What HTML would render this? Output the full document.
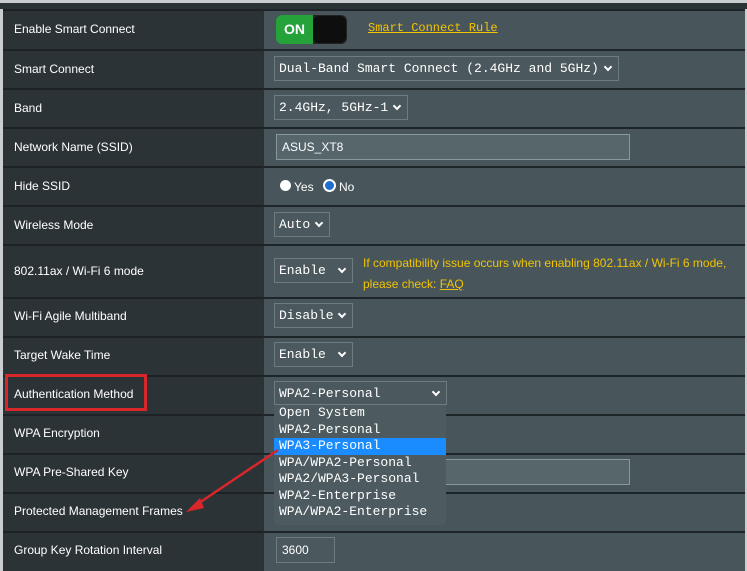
<!DOCTYPE html><html><head><style>
body{margin:0;width:747px;height:569px;background:#c9cdcf;position:relative;overflow:hidden;font-family:"Liberation Sans",Arial,sans-serif}
.a{position:absolute}
.lab{position:absolute;left:3px;width:260px;background:#2c3337;border-top:2px solid #1c2225}
.val{position:absolute;left:263px;width:481px;background:#48565b;border-top:2px solid #1e2528;border-left:1px solid #2a3134}
.t{position:absolute;left:14px;color:#fff;font-size:12px}
.sel{position:absolute;background:#4b595e;border:1px solid #6e7c81;color:#fff;font:13px "Liberation Mono",monospace;box-sizing:border-box;padding-left:4px;line-height:23px;height:25px}
.sel:after{content:"";position:absolute;right:7px;top:7px;width:4px;height:4px;border-right:2px solid #fff;border-bottom:2px solid #fff;transform:rotate(45deg)}
.m{font:13px "Liberation Mono",monospace;color:#fff}
</style></head><body>
<div class="a" style="left:0;top:3px;width:747px;height:6px;background:#2c3337"></div>
<div class="lab" style="top:9px;height:38px"></div><div class="val" style="top:9px;height:38px"></div>
<div class="lab" style="top:49px;height:37px"></div><div class="val" style="top:49px;height:37px"></div>
<div class="lab" style="top:88px;height:37px"></div><div class="val" style="top:88px;height:37px"></div>
<div class="lab" style="top:127px;height:37px"></div><div class="val" style="top:127px;height:37px"></div>
<div class="lab" style="top:166px;height:37px"></div><div class="val" style="top:166px;height:37px"></div>
<div class="lab" style="top:205px;height:37px"></div><div class="val" style="top:205px;height:37px"></div>
<div class="lab" style="top:244px;height:51px"></div><div class="val" style="top:244px;height:51px"></div>
<div class="lab" style="top:297px;height:37px"></div><div class="val" style="top:297px;height:37px"></div>
<div class="lab" style="top:336px;height:37px"></div><div class="val" style="top:336px;height:37px"></div>
<div class="lab" style="top:375px;height:37px"></div><div class="val" style="top:375px;height:37px"></div>
<div class="lab" style="top:414px;height:37px"></div><div class="val" style="top:414px;height:37px"></div>
<div class="lab" style="top:453px;height:37px"></div><div class="val" style="top:453px;height:37px"></div>
<div class="lab" style="top:492px;height:37px"></div><div class="val" style="top:492px;height:37px"></div>
<div class="lab" style="top:531px;height:38px"></div><div class="val" style="top:531px;height:38px"></div>
<div class="t" style="top:22px">Enable Smart Connect</div>
<div class="t" style="top:62px">Smart Connect</div>
<div class="t" style="top:101px">Band</div>
<div class="t" style="top:140px">Network Name (SSID)</div>
<div class="t" style="top:179px">Hide SSID</div>
<div class="t" style="top:218px">Wireless Mode</div>
<div class="t" style="top:264px">802.11ax / Wi-Fi 6 mode</div>
<div class="t" style="top:309px">Wi-Fi Agile Multiband</div>
<div class="t" style="top:348px">Target Wake Time</div>
<div class="t" style="top:387px">Authentication Method</div>
<div class="t" style="top:426px">WPA Encryption</div>
<div class="t" style="top:465px">WPA Pre-Shared Key</div>
<div class="t" style="top:504px">Protected Management Frames</div>
<div class="t" style="top:543px">Group Key Rotation Interval</div>
<div class="a" style="left:5px;top:374px;width:136px;height:31px;border:3px solid #d8262b"></div>
<div class="a" style="left:276px;top:15px;width:71px;height:29px;border-radius:6px;background:#222;"></div>
<div class="a" style="left:313px;top:16px;width:33px;height:27px;border-radius:6px;background:#0e0e0e;"></div>
<div class="a" style="left:276px;top:15px;width:37px;height:29px;border-radius:6px 0 0 6px;background:#25a33a;color:#fff;font-weight:bold;font-size:14px;line-height:29px;text-align:center">ON</div>
<div class="a m" style="left:368px;top:21px;color:#f4c400;text-decoration:underline;font-size:12px">Smart Connect Rule</div>
<div class="sel" style="left:274px;top:56px;width:345px">Dual-Band Smart Connect (2.4GHz and 5GHz)</div>
<div class="sel" style="left:274px;top:95px;width:134px">2.4GHz, 5GHz-1</div>
<div class="a" style="left:276px;top:134px;width:354px;height:26px;background:#56666b;border:1px solid #8a989c;box-sizing:border-box;color:#fff;font-size:12px;line-height:25px;padding-left:5px">ASUS_XT8</div>
<div class="a" style="left:280px;top:180px;width:11px;height:11px;border-radius:50%;background:#fff"></div>
<div class="a" style="left:294px;top:180px;color:#fff;font-size:12px">Yes</div>
<div class="a" style="left:323px;top:179px;width:9px;height:9px;border-radius:50%;background:#1e6fd0;border:2px solid #fff"></div>
<div class="a" style="left:339px;top:180px;color:#fff;font-size:12px">No</div>
<div class="sel" style="left:274px;top:212px;width:56px">Auto</div>
<div class="sel" style="left:274px;top:258px;width:79px">Enable</div>
<div class="a" style="left:363px;top:253px;color:#f0c400;font-size:12px;line-height:21px">If compatibility issue occurs when enabling 802.11ax / Wi-Fi 6 mode,<br>please check: <u>FAQ</u></div>
<div class="sel" style="left:274px;top:303px;width:79px">Disable</div>
<div class="sel" style="left:274px;top:342px;width:79px">Enable</div>
<div class="sel" style="left:274px;top:381px;width:173px;height:24px">WPA2-Personal</div>
<div class="a" style="left:276px;top:459px;width:354px;height:26px;background:#56666b;border:1px solid #8a989c;box-sizing:border-box"></div>
<div class="a" style="left:276px;top:537px;width:59px;height:26px;background:#4b595e;border:1px solid #6e7c81;box-sizing:border-box;color:#fff;font-size:12px;line-height:25px;padding-left:5px">3600</div>
<div class="a m" style="left:274px;top:405px;width:172px;height:120px;background:#4d5b60;border-radius:0 0 5px 5px;line-height:16.5px">
<div style="padding-left:5px">Open System</div>
<div style="padding-left:5px">WPA2-Personal</div>
<div style="padding-left:5px;background:#1a8cff">WPA3-Personal</div>
<div style="padding-left:5px">WPA/WPA2-Personal</div>
<div style="padding-left:5px">WPA2/WPA3-Personal</div>
<div style="padding-left:5px">WPA2-Enterprise</div>
<div style="padding-left:5px">WPA/WPA2-Enterprise</div>
</div>
<svg class="a" style="left:0;top:0" width="747" height="569"><line x1="278" y1="450" x2="196" y2="505" stroke="#d8262b" stroke-width="2.5"/><polygon points="186,512 200,498 204,508" fill="#d8262b"/></svg>
</body></html>
